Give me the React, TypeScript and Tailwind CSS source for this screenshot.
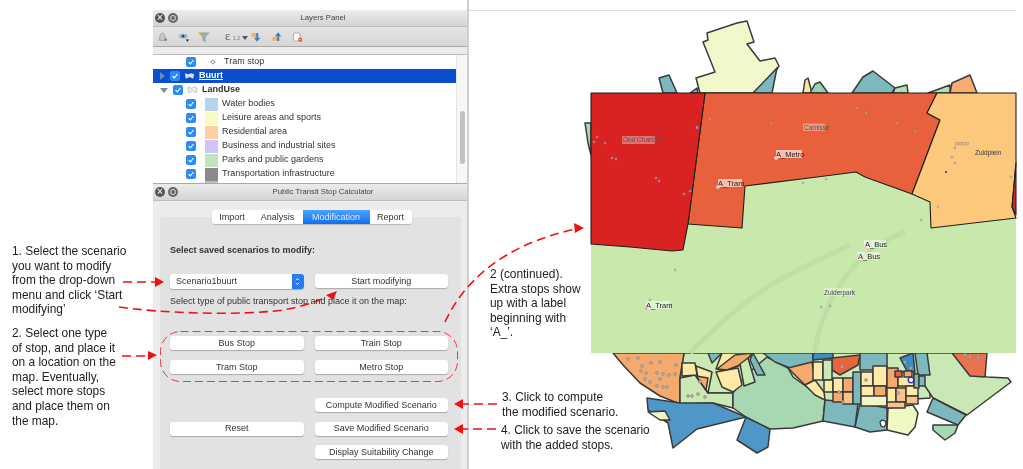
const SANS = "font-['Liberation_Sans',Arial,sans-serif]";

type Poly = [string, string];

// Outline map, in page coordinates (the svg viewBox starts at the column's x)
const OUTER: Poly[] = [
  ["#f0f8cc", "707,33 737,23 747,21 754,42 747,44 760,61 775,58 779,66 760,93 700,93 696,78 715,72 703,42 708,40"],
  ["#7db8bd", "777,68 772,93 753,93"],
  ["#7db8bd", "659,78 669,75 677,93 663,93"],
  ["#7db8bd", "690,93 697,88 698,93"],
  ["#fbe7a0", "803,93 805,80 808,78 812,93"],
  ["#9bd0b0", "810,93 815,84 820,82 828,93"],
  ["#7db8bd", "852,93 863,77 873,71 895,88 892,93"],
  ["#b4deb4", "893,93 895,88 907,85 908,93"],
  ["#b4deb4", "928,93 950,85 950,93"],
  ["#f9ad72", "950,93 952,83 970,75 977,93"],
  ["#a9d9b0", "585,123 591,123 591,155 588,143"],
  // below the inset
  ["#cbe9b4", "684,353 930,353 930,398 825,405 733,393 708,393 695,375 680,378"],
  ["#c9e8b5", "927,353 952,353 987,377 1008,378 1011,382 967,415 933,398 923,383"],
  ["#f6a96c", "613,353 623,365 640,383 660,396 680,404 680,377 684,353"],
  ["#cbe9b4", "680,378 695,375 708,393 733,393 733,408 713,403 680,404"],
  ["#4f97c6", "647,398 680,403 713,403 746,417 697,429 673,448 668,423 648,410"],
  ["#eff7c4", "648,412 665,411 670,420 660,420"],
  ["#4f97c6", "746,417 770,429 768,447 757,453 737,440"],
  ["#a8d8b1", "733,393 745,376 767,357 788,368 793,377 825,400 823,421 793,428 770,429 746,417 733,408"],
  ["#7db8bd", "708,353 712,363 722,353"],
  ["#7db8bd", "753,353 765,375 757,375 750,360"],
  ["#7db8bd", "763,353 813,353 813,365 790,368 775,362"],
  ["#7db8bd", "825,400 858,403 855,427 823,421"],
  ["#7db8bd", "860,403 887,408 887,430 870,432 855,427"],
  ["#f0f8c4", "888,408 913,405 918,413 915,427 908,435 887,430"],
  ["#7db8bd", "933,398 966,415 958,425 927,412"],
  ["#a8d8b1", "933,425 958,425 955,433 945,440 933,430"],
  ["#e8714f", "952,353 987,353 985,377 970,376"],
  ["#3d8cc4", "813,353 833,353 833,358 813,360"],
  ["#e8643f", "832,358 860,355 858,365 840,375 832,370"],
  ["#7db8bd", "860,353 887,353 887,370 860,370"],
  ["#3d8cc4", "900,358 913,353 915,373 908,373"],
  ["#7db8bd", "915,353 927,353 930,375 918,375"],
  ["#fdeaa8", "716,369 722,353 752,353 745,363 726,371"],
  ["#f6a96c", "717,369 735,355 752,353 745,363 727,370"],
  ["#fdeaa8", "682,363 695,363 697,375 682,376"],
  ["#fdeaa8", "696,366 712,372 708,393 698,378"],
  ["#f6a96c", "696,376 708,378 706,390"],
  ["#fdeaa8", "716,372 738,368 742,385 733,392 722,387"],
  ["#cbe9b4", "740,364 748,358 755,382 744,386"],
  ["#f6a96c", "788,368 812,362 815,380 805,385"],
  ["#fdeaa8", "805,385 815,380 824,392 825,400 815,395"],
];

// [x, y, w, h, fill] for the little blocks in the dense part of the map
const CELLS: [number, number, number, number, string][] = [
  [813, 362, 10, 18, "#fdeaa8"], [823, 360, 9, 20, "#cbe9b4"], [824, 380, 9, 12, "#fdeaa8"],
  [833, 378, 10, 14, "#fdeaa8"], [843, 378, 10, 14, "#f6a96c"], [833, 392, 10, 10, "#f6a96c"],
  [843, 392, 10, 12, "#f9c48a"], [853, 372, 8, 32, "#7db8bd"], [861, 372, 12, 14, "#fdeaa8"],
  [873, 366, 14, 20, "#fdeaa8"], [861, 386, 13, 15, "#fdeaa8"], [874, 386, 12, 12, "#f6a96c"],
  [861, 396, 26, 10, "#eff7c4"], [887, 368, 11, 20, "#f6a96c"], [887, 388, 9, 16, "#fdeaa8"],
  [896, 388, 10, 14, "#f9c48a"], [887, 402, 18, 6, "#f9c48a"], [898, 372, 16, 14, "#fdeaa8"],
  [906, 386, 12, 10, "#fdeaa8"], [906, 396, 12, 8, "#f9c48a"], [895, 371, 7, 6, "#e8643f"],
  [904, 371, 8, 6, "#f6a96c"], [914, 374, 5, 14, "#7db8bd"], [919, 376, 6, 10, "#7db8bd"],
];

const DOTS = [
  [642, 366], [638, 358], [628, 359], [651, 363], [660, 362], [676, 365], [641, 371], [646, 373],
  [657, 373], [663, 374], [669, 375], [675, 374], [645, 379], [650, 382], [657, 386], [660, 379],
  [663, 387], [667, 387], [688, 396], [692, 396], [698, 394], [705, 397], [700, 382], [842, 367],
  [905, 362], [911, 368], [965, 355], [970, 357], [978, 358], [839, 392], [843, 402], [866, 380],
  [898, 393],
];

const INSET_DOTS = [
  [597, 137], [594, 142], [605, 143], [612, 158], [616, 159], [656, 178], [659, 181], [684, 194],
  [690, 191], [697, 128], [697, 127], [710, 119], [771, 123], [857, 108], [866, 113], [897, 123],
  [915, 131], [955, 148], [952, 157], [955, 163], [1011, 177], [938, 207], [921, 220], [803, 183],
  [826, 179], [675, 270], [650, 300], [821, 307], [830, 306],
];

function MapDrawing() {
  return (
    <svg viewBox="469 0 554 469" className="w-[554px] h-[469px]" aria-hidden>
      <g stroke="#3a3a3a" strokeWidth="1.5" strokeLinejoin="round">
        {OUTER.map(([fill, points], i) => (
          <polygon key={i} fill={fill} points={points} />
        ))}
        {CELLS.map(([x, y, w, h, fill], i) => (
          <rect key={i} x={x} y={y} width={w} height={h} fill={fill} />
        ))}
      </g>
      {DOTS.map(([x, y], i) => (
        <circle key={i} cx={x} cy={y} r="1.4" fill="#bbb" stroke="#777" strokeWidth="0.6" />
      ))}
      <path d="M880,422 l2,-2 l3,1 l1,3 l-2,3 l-3,-1 z" fill="#fff" stroke="#333" strokeWidth="1.2" />
      <circle cx="911" cy="380" r="2.8" fill="none" stroke="#2230d0" strokeWidth="1.3" />

      {/* zoomed inset */}
      <rect x="591" y="93" width="425" height="260" fill="#c9e8ab" />
      <path d="M690,353 C760,280 800,270 850,245 M815,353 C820,310 850,250 905,232" fill="none" stroke="#bfe0a3" strokeWidth="5" />
      <g stroke="#1f1f1f" strokeWidth="1.1" strokeLinejoin="round">
        <polygon fill="#e8603c" points="705,93 937,93 927,113 940,120 912,194 865,177 856,172 817,177 745,186 742,228 688,224" />
        <polygon fill="#d92323" points="591,93 705,93 688,224 683,250 672,251 630,247 591,244" />
        <polygon fill="#fcc97c" points="937,93 1016,93 1016,163 1012,207 1016,218 931,228 930,202 912,194 940,120 927,113" />
        <polygon fill="#d92323" points="1016,163 1012,207 1016,215" />
      </g>
      {INSET_DOTS.map(([x, y], i) => (
        <circle key={i} cx={x} cy={y} r="1.1" fill="#bbb" fillOpacity="0.7" stroke="#888" strokeWidth="0.4" />
      ))}
      <circle cx="946" cy="172" r="0.9" fill="#223" />
      <rect x="622" y="136" width="33" height="8" rx="1" fill="#fff" fillOpacity="0.35" />
      <rect x="803" y="123.500" width="22" height="7.500" rx="1" fill="#fff" fillOpacity="0.35" />
      <rect x="776" y="150" width="26" height="8" fill="#fff" fillOpacity="0.6" />
      <rect x="718" y="179" width="24" height="8" fill="#fff" fillOpacity="0.6" />
      <rect x="864" y="240" width="22" height="8" fill="#fff" fillOpacity="0.5" />
      <rect x="857" y="252" width="22" height="8" fill="#fff" fillOpacity="0.5" />
      <rect x="646" y="301" width="24" height="8" fill="#fff" fillOpacity="0.5" />
      <rect x="824" y="288" width="28" height="8" fill="#fff" fillOpacity="0.35" />
      <g fontFamily="'Liberation Sans', Arial, sans-serif" fontSize="6.5" fill="#555">
        <text x="623" y="142">Oud Charlois</text>
        <text x="804" y="129.500">Carnisse</text>
        <text x="975" y="154.500" fill="#334">Zuidplein</text>
        <text x="955" y="145" fontSize="5" fill="#888">ppppp</text>
        <text x="824" y="294.500" fill="#445">Zuiderpark</text>
      </g>
      <g fontFamily="'Liberation Sans', Arial, sans-serif" fontSize="7.500" fill="#222">
        <text x="776" y="156.500">A_Metro</text>
        <text x="718" y="185.500">A_Tram</text>
        <text x="865" y="246.500">A_Bus</text>
        <text x="858" y="258.500">A_Bus</text>
        <text x="646" y="307.500">A_Tram</text>
      </g>
      <g fill="#f7b6c0" stroke="#eee" strokeWidth="0.5">
        <circle cx="776" cy="158" r="1.6" />
        <circle cx="718" cy="187" r="1.6" />
        <circle cx="865" cy="248" r="1.6" />
        <circle cx="858" cy="256" r="1.6" />
        <circle cx="646" cy="309" r="1.6" fill="#f48aa0" />
      </g>
    </svg>
  );
}

function ArrowOverlay() {
  const dash = "9 5";
  return (
    <svg className="absolute left-0 top-0 w-[1023px] h-[469px] pointer-events-none" viewBox="0 0 1023 469" aria-hidden>
      <g fill="none" stroke="#f01010" strokeWidth="1.6" strokeDasharray={dash}>
        <path d="M123,282 H155" />
        <path d="M119,307 C160,313 240,316 283,310 C300,307 312,303 322,299" />
        <path d="M122,356 H148" />
        <path d="M445,322 C462,285 500,245 576,229" />
        <path d="M497,404 H462" />
        <path d="M496,429 H462" />
      </g>
      <rect x="160.500" y="331.500" width="297" height="50" rx="20" fill="none" stroke="#f01010" strokeWidth="0.8" strokeDasharray="8 4" />
      <g fill="#f01010">
        <polygon points="164,282 155,277 155,287" />
        <polygon points="337,291 326,295 333,300" />
        <polygon points="157,355 148,351 148,360" />
        <polygon points="584,228 574,223 575,233" />
        <polygon points="454,404 463,399 463,409" />
        <polygon points="454,429 463,424 463,434" />
      </g>
    </svg>
  );
}

function WindowButtons() {
  return (
    <div className="flex items-center gap-[3px]">
      <span className="flex items-center justify-center w-[10px] h-[10px] rounded-full bg-[#555] text-[#ddd] text-[10px] font-bold leading-none">×</span>
      <span className="flex items-center justify-center w-[10px] h-[10px] rounded-full bg-[#666]">
        <span className="w-[6px] h-[6px] rounded-full border border-[#ddd]" />
      </span>
    </div>
  );
}

function TitleBar({ title }: { title: string }) {
  return (
    <div className="relative flex shrink-0 items-center h-[17px] pl-[2px] bg-gradient-to-b from-[#ececec] to-[#d4d4d4] border-b border-[#bdbdbd]">
      <WindowButtons />
      <span className="absolute left-[26px] right-0 text-center text-[7.700px] text-[#444]">{title}</span>
    </div>
  );
}

function Check() {
  return (
    <span className="flex items-center justify-center w-[10px] h-[10px] rounded-[2px] bg-[#2b8cf5] shrink-0">
      <svg viewBox="0 0 10 10" className="w-[8px] h-[8px]" fill="none" stroke="#fff" strokeWidth="1.4">
        <path d="M2,5.200 L4.200,7.500 L8,2.500" />
      </svg>
    </span>
  );
}

function ToolbarIcons() {
  return (
    <div className="flex shrink-0 items-center h-[20px] pl-[4px] bg-gradient-to-b from-[#e4e4e4] to-[#d6d6d6] border-b border-[#aaa]">
      <svg viewBox="0 0 14 14" className="w-[11px] h-[13px] mr-[10px]">
        <path d="M3,12 L4,5 L7,2 L10,5 L11,12 Z" fill="#c5c9c5" stroke="#8d8f8d" strokeWidth="0.8" />
        <path d="M9,11 h4 M11,9 v4" stroke="#5aa85a" strokeWidth="1.4" />
      </svg>
      <svg viewBox="0 0 14 14" className="w-[12px] h-[12px] mr-[8px]">
        <ellipse cx="6" cy="6" rx="5" ry="2.800" fill="#9fb4c8" />
        <circle cx="6" cy="6" r="1.600" fill="#345" />
        <path d="M9,10 h4 l-2,2.500 z" fill="#222" />
      </svg>
      <svg viewBox="0 0 14 14" className="w-[12px] h-[12px] mr-[15px]">
        <path d="M1,2 H13 L8.500,7 V12.500 L5.500,11 V7 Z" fill="#7fb2d6" stroke="#c9a83a" strokeWidth="0.8" />
      </svg>
      <span className="w-[8px] -mt-[3px] text-[13px] leading-none text-[#667] font-['Liberation_Serif',serif]">ε</span>
      <span className="w-[9px] mt-[4px] text-[5px] leading-none text-[#778]">1.2</span>
      <svg viewBox="0 0 6 6" className="w-[6px] h-[6px] mt-[3px] mr-[2px]"><path d="M0,1 H6 L3,5 Z" fill="#555" /></svg>
      <svg viewBox="0 0 14 14" className="w-[11px] h-[12px] mr-[10px]">
        <rect x="2" y="2" width="7" height="5" fill="#f0b35a" />
        <path d="M8,2 V8 H5 L9,13 L13,8 H10.500 V2 Z" fill="#3b7fc6" />
      </svg>
      <svg viewBox="0 0 14 14" className="w-[11px] h-[12px] mr-[10px]">
        <rect x="2" y="7" width="7" height="5" fill="#f0b35a" />
        <path d="M8,12 V6 H5 L9,1 L13,6 H10.500 V12 Z" fill="#3b7fc6" />
      </svg>
      <svg viewBox="0 0 14 14" className="w-[11px] h-[12px]">
        <rect x="2" y="2" width="8" height="10" rx="1" fill="#fff" stroke="#888" strokeWidth="0.8" />
        <circle cx="10.500" cy="10.500" r="2.600" fill="#e04040" />
        <path d="M9,10.500 h3" stroke="#fff" strokeWidth="0.9" />
      </svg>
    </div>
  );
}

const LEGEND = [
  ["Water bodies", "bg-[#b5d3ea]"],
  ["Leisure areas and sports", "bg-[#fbfac4]"],
  ["Residential area", "bg-[#fdcfa2]"],
  ["Business and industrial sites", "bg-[#cfc5f7]"],
  ["Parks and public gardens", "bg-[#c2e3bd]"],
  ["Transportation infrastructure", "bg-[#8a8a8a]"],
];

function LayerTree() {
  return (
    <div className="relative shrink-0 h-[128px] bg-white overflow-hidden text-[9px] text-[#333]">
      <div className="w-[303px]">
        <div className="flex items-center h-[14px] pl-[33px]">
          <Check />
          <span className="ml-[15px] w-[4px] h-[4px] rotate-45 border border-[#999]" />
          <span className="ml-[9px]">Tram stop</span>
        </div>
        <div className="flex items-center h-[14px] pl-[7px] bg-[#0a4fd0] text-white">
          <span className="w-0 h-0 border-y-[4px] border-y-transparent border-l-[5px] border-l-[#6f8ac0]" />
          <span className="ml-[5px]"><Check /></span>
          <svg viewBox="0 0 12 8" className="ml-[4px] w-[11px] h-[8px]"><path d="M1,1 L5,2 L8,1 L11,2 L10,7 L6,5 L2,7 Z" fill="#ddd" /></svg>
          <span className="ml-[4px] font-bold underline">Buurt</span>
        </div>
        <div className="flex items-center h-[14px] pl-[7px]">
          <span className="w-0 h-0 border-x-[4px] border-x-transparent border-t-[5px] border-t-[#888]" />
          <span className="ml-[5px]"><Check /></span>
          <svg viewBox="0 0 12 8" className="ml-[4px] w-[11px] h-[8px]"><path d="M1,1 L5,2 L8,1 L11,2 L10,7 L6,5 L2,7 Z" fill="#eee" stroke="#aaa" strokeWidth="0.7" /></svg>
          <span className="ml-[4px] font-bold">LandUse</span>
        </div>
        {LEGEND.map(([label, color]) => (
          <div key={label} className="flex items-center h-[14px] pl-[33px]">
            <Check />
            <span className={`ml-[9px] w-[13px] h-[13px] ${color}`} />
            <span className="ml-[4px] whitespace-nowrap">{label}</span>
          </div>
        ))}
        <div className="ml-[52px] w-[13px] h-[2px] bg-[#bbb]" />
      </div>
      <div className="absolute left-[303px] top-0 bottom-0 w-[11px] bg-[#f7f7f7] border-l border-[#e5e5e5]">
        <div className="mt-[56px] ml-[3px] w-[5px] h-[53px] rounded-full bg-[#c2c2c2]" />
      </div>
    </div>
  );
}

function PushButton({ children }: { children: React.ReactNode }) {
  return (
    <button
      type="button"
      className="h-[14px] rounded-[3px] bg-white text-[9px] leading-none text-[#333] shadow-[0_1px_1px_#aaa] whitespace-nowrap"
    >
      {children}
    </button>
  );
}

function Tabs() {
  const tabs = ["Import", "Analysis", "Modification", "Report"];
  const widths = ["w-[41px]", "w-[50px]", "w-[67px]", "w-[42px]"];
  return (
    <div className="relative z-10 flex justify-center h-[14px] pl-[2px]">
      <div className="flex rounded-[3px] shadow-[0_1px_1px_#bbb] overflow-hidden text-[9px] leading-[14px] text-center">
        {tabs.map((t, i) => (
          <span
            key={t}
            className={`${widths[i]} ${t === "Modification" ? "bg-gradient-to-b from-[#4aa3fb] to-[#0f6df0] text-[#dbe9fb]" : "bg-white text-[#333]"}`}
          >
            {t}
          </span>
        ))}
      </div>
    </div>
  );
}

function Calculator() {
  return (
    <div className="flex-1 min-h-0 overflow-hidden bg-[#ececec] pt-[9px] pl-[7px] pr-[6px]">
      <Tabs />
      <div className="-mt-[7px] h-[260px] rounded-t-[3px] bg-[#e2e2e2] pl-[10px] pr-[13px] pt-[27px] text-[9px] text-[#333]">
        <p className="h-[12px] leading-[12px] font-bold">Select saved scenarios to modify:</p>
        <div className="mt-[18px] grid grid-cols-2 gap-x-[11px]">
          <div className="flex h-[15px] items-center rounded-[3px] bg-white shadow-[0_1px_1px_#aaa] pl-[6px]">
            <span className="flex-1">Scenario1buurt</span>
            <span className="flex flex-col items-center justify-center w-[12px] h-[15px] rounded-r-[3px] bg-[#2b78f0]">
              <svg viewBox="0 0 8 12" className="w-[7px] h-[11px]" fill="none" stroke="#fff" strokeWidth="1.1">
                <path d="M2,4.500 L4,2.500 L6,4.500 M2,7.500 L4,9.500 L6,7.500" />
              </svg>
            </span>
          </div>
          <PushButton>Start modifying</PushButton>
        </div>
        <p className="mt-[6px] h-[12px] leading-[12px] whitespace-nowrap">Select type of public transport stop and place it on the map:</p>
        <div className="mt-[29px] grid grid-cols-2 gap-x-[11px] gap-y-[10px]">
          <PushButton>Bus Stop</PushButton>
          <PushButton>Train Stop</PushButton>
          <PushButton>Tram Stop</PushButton>
          <PushButton>Metro Stop</PushButton>
        </div>
        <div className="mt-[24px] grid grid-cols-2 gap-x-[11px] gap-y-[9.500px]">
          <span />
          <PushButton>Compute Modified Scenario</PushButton>
          <PushButton>Reset</PushButton>
          <PushButton>Save Modified Scenario</PushButton>
          <span />
          <PushButton>Display Suitability Change</PushButton>
        </div>
      </div>
    </div>
  );
}

export default function App() {
  return (
    <div className={`${SANS} relative flex w-[1023px] h-[469px] overflow-hidden bg-white blur-[0.35px]`}>
      <aside className="w-[153px] shrink-0 pl-[12px] pt-[244px] text-[11.900px] leading-[14.600px] text-[#222]">
        <p>1. Select the scenario<br />you want to modify<br />from the drop-down<br />menu and click ‘Start<br />modifying’</p>
        <p className="mt-[9px]">2. Select one type<br />of stop, and place it<br />on a location on the<br />map. Eventually,<br />select more stops<br />and place them on<br />the map.</p>
      </aside>

      <section className="w-[316px] shrink-0 pt-[10px] flex flex-col border-r-2 border-[#cfcfcf]">
        <TitleBar title="Layers Panel" />
        <ToolbarIcons />
        <div className="shrink-0 h-[8px] bg-[#ececec] border-b border-[#bbb]" />
        <LayerTree />
        <div className="shrink-0 h-[1px] bg-[#aaa]" />
        <TitleBar title="Public Transit Stop Calculator" />
        <Calculator />
      </section>

      <section className="relative flex-1">
        <div className="absolute left-0 right-[7px] top-[10px] h-px bg-[#dcdcdc]" />
        <MapDrawing />
        <p className="absolute left-[21px] top-[267px] text-[11.900px] leading-[14.600px] text-[#222] whitespace-nowrap">
          2 (continued).<br />Extra stops show<br />up with a label<br />beginning with<br />‘A_’.
        </p>
        <p className="absolute left-[33px] top-[390px] text-[11.900px] leading-[14.600px] text-[#222] whitespace-nowrap">
          3. Click to compute<br />the modified scenario.
        </p>
        <p className="absolute left-[32px] top-[423px] text-[11.900px] leading-[14.600px] text-[#222] whitespace-nowrap">
          4. Click to save the scenario<br />with the added stops.
        </p>
      </section>

      <ArrowOverlay />
    </div>
  );
}
